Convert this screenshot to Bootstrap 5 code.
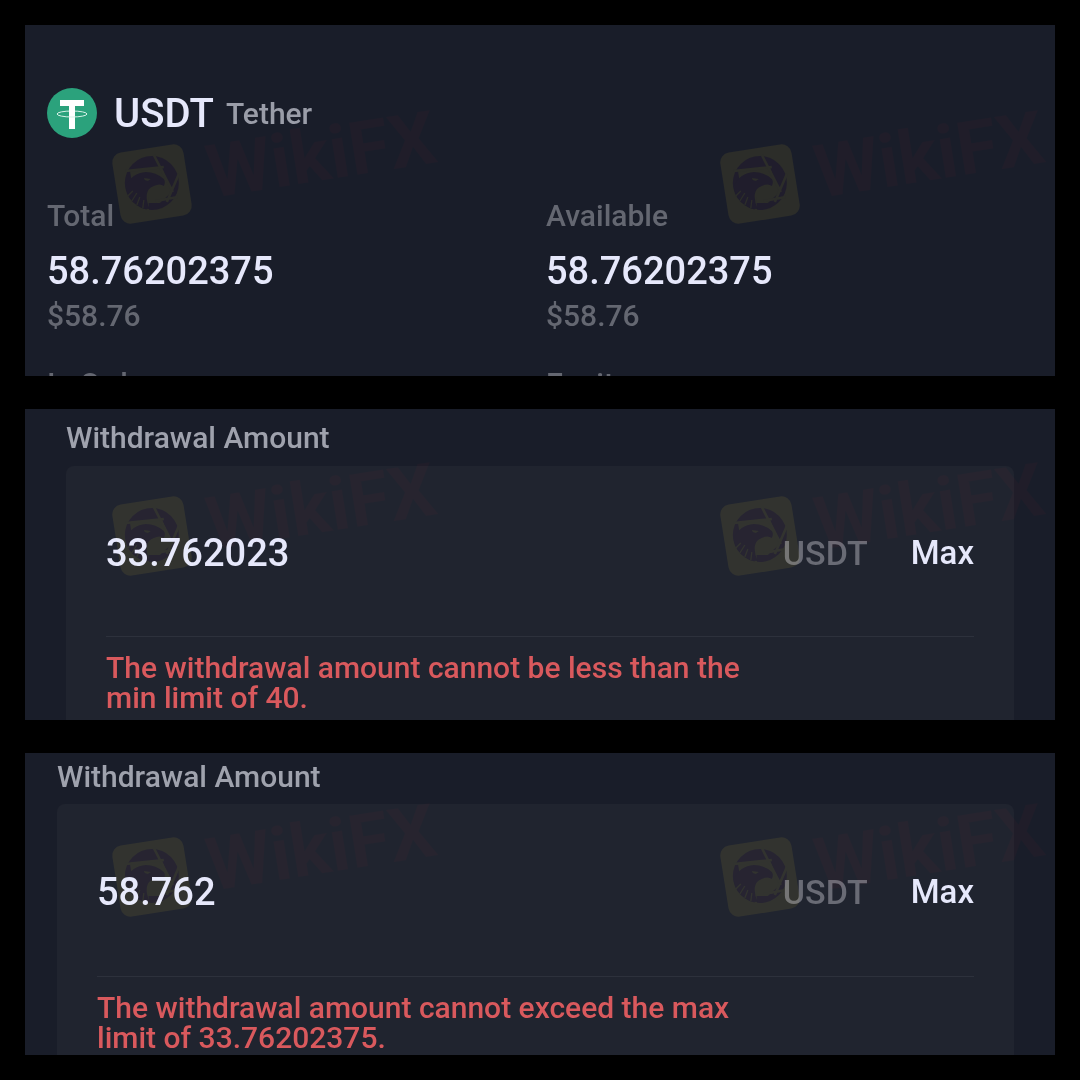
<!DOCTYPE html>
<html lang="en" data-bs-theme="dark">
<head>
<meta charset="utf-8">
<meta name="viewport" content="width=device-width, initial-scale=1">
<title>USDT withdrawal</title>
<link href="https://cdn.jsdelivr.net/npm/bootstrap@5.3.0/dist/css/bootstrap.min.css" rel="stylesheet">
<style>
  body { background: #000; color: #e6e8fb; font-family: Roboto, "Liberation Sans", sans-serif; font-size: 30px; font-weight: 500; }
  .page { padding: 25px; gap: 33px; }
  .panel { background: #191d29; }
  .asset { max-height: 351px; padding: 62px 10px 0 22px; }
  .coin { width: 51px; height: 51px; }
  .asset-head { gap: 16px; margin-bottom: 58px; }
  .ticker { font-size: 40px; line-height: 53px; }
  .coin-name { line-height: 51px; color: #9a9da8; }
  .balances { row-gap: 32px; }
  .muted { color: #646771; line-height: 36px; }
  .figure { font-size: 38px; line-height: 54px; margin-top: 10px; }
  .withdraw { padding: 11px 41px 0 41px; }
  .withdraw.wide { padding: 6px 41px 0 32px; }
  .field-label { color: #9fa2ad; line-height: 36px; margin-bottom: 10px; }
  .wide .field-label { margin-bottom: 9px; }
  .box { background: #20242f; border-radius: 8px 8px 0 0; padding: 0 40px 7px; }
  .wide .box { padding-bottom: 2px; }
  .amount-row { height: 171px; padding-top: 4px; border-bottom: 1px solid #2d313c; gap: 43px; }
  .wide .amount-row { height: 173px; }
  .amount-row input { font-size: 38px; font-weight: 500; color: #e6e8fb; min-width: 0; outline: 0; }
  .unit { font-size: 34px; line-height: 40px; color: #696b75; }
  .max { font-size: 33px; font-weight: 500; color: #e6e8fb; line-height: 40px; }
  .error { color: #d9595d; line-height: 30px; margin: 16px 0 0; max-width: 660px; }
  .stamp { width: 345px; height: 140px; top: 75px; pointer-events: none; mix-blend-mode: screen; }
  .withdraw .stamp { top: 43px; }
  .withdraw.wide .stamp { top: 40px; }
  .stamp-a { left: 80px; }
  .stamp-b { right: 0; width: 342px; }
  .stamp-name { font: 700 74px Roboto, sans-serif; fill: #080000; }
</style>
<script src="https://cdn.jsdelivr.net/npm/bootstrap@5.3.0/dist/js/bootstrap.bundle.min.js"></script>
</head>
<body>
<svg class="d-none" aria-hidden="true">
  <symbol id="stamp" viewBox="0 0 345 140">
    <g transform="rotate(-9 47 84)">
      <rect x="11" y="48" width="72" height="72" rx="10" fill="#151200"/>
      <g transform="translate(47 83) rotate(9)">
        <circle r="27" fill="#080003"/>
        <path d="M-22-13L10-16L20 9L8 20L-4 20L-20 0Z" fill="#151200"/>
        <g fill="none" stroke="#151200" stroke-width="2.6">
          <path d="M-26-12L12-16M2-28L21 9M27-9L15 19M26 14L4 18M-4 27L-5 14"/>
        </g>
        <path d="M-26 3Q-20-10-6-11Q4-11 12-4Q14-1 12 3Q8 0 2 3Q-4 5-5 11Q-6 18-2 26Q-11 26-17 20Q-26 12-26 3Z" fill="#080003"/>
        <path d="M-8-5l7 1-3 2-3-1z" fill="#151200"/>
        <path d="M-24 13l5-5M-20 18l5-8M-15 22l3-8M-9 25l1-8" fill="none" stroke="#151200" stroke-width="1.3"/>
      </g>
    </g>
    <text class="stamp-name" transform="translate(106 98) rotate(-9)">WikiFX</text>
  </symbol>
</svg>

<main class="page d-flex flex-column">
  <section class="panel asset position-relative overflow-hidden">
    <div class="asset-head d-flex align-items-center">
      <svg class="coin flex-shrink-0" viewBox="0 0 51 51" role="img" aria-label="Tether">
        <circle cx="25" cy="25" r="25" fill="#2ba27c"/>
        <path d="M13 12h24v6h-9v23h-6v-23h-9z" fill="#fff"/>
        <ellipse cx="25" cy="26" rx="15" ry="3" fill="none" stroke="#d8f2e8" stroke-width="1"/>
        <path d="M22 21h6v5h-6z" fill="#fff"/>
      </svg>
      <div class="d-flex align-items-center gap-2">
        <span class="ticker">USDT</span>
        <span class="coin-name ms-1">Tether</span>
      </div>
    </div>
    <div class="balances row gx-0">
      <div class="col-6">
        <div class="muted">Total</div>
        <div class="figure">58.76202375</div>
        <div class="muted">$58.76</div>
      </div>
      <div class="col-6">
        <div class="muted">Available</div>
        <div class="figure">58.76202375</div>
        <div class="muted">$58.76</div>
      </div>
      <div class="col-6"><div class="muted">In Order</div></div>
      <div class="col-6"><div class="muted">Equity</div></div>
    </div>
    <svg class="stamp stamp-a position-absolute"><use href="#stamp"/></svg>
    <svg class="stamp stamp-b position-absolute" viewBox="0 0 342 140"><use href="#stamp" width="345" height="140"/></svg>
  </section>

  <section class="panel withdraw position-relative overflow-hidden">
    <label class="field-label d-block" for="amount-min">Withdrawal Amount</label>
    <div class="box">
      <div class="amount-row d-flex align-items-center">
        <input id="amount-min" class="bg-transparent border-0 p-0 flex-grow-1" type="text" inputmode="decimal" value="33.762023">
        <span class="unit">USDT</span>
        <button class="max btn border-0 p-0" type="button">Max</button>
      </div>
      <p class="error">The withdrawal amount cannot be less than the min limit of 40.</p>
    </div>
    <svg class="stamp stamp-a position-absolute"><use href="#stamp"/></svg>
    <svg class="stamp stamp-b position-absolute" viewBox="0 0 342 140"><use href="#stamp" width="345" height="140"/></svg>
  </section>

  <section class="panel withdraw wide position-relative overflow-hidden">
    <label class="field-label d-block" for="amount-max">Withdrawal Amount</label>
    <div class="box">
      <div class="amount-row d-flex align-items-center">
        <input id="amount-max" class="bg-transparent border-0 p-0 flex-grow-1" type="text" inputmode="decimal" value="58.762">
        <span class="unit">USDT</span>
        <button class="max btn border-0 p-0" type="button">Max</button>
      </div>
      <p class="error">The withdrawal amount cannot exceed the max limit of 33.76202375.</p>
    </div>
    <svg class="stamp stamp-a position-absolute"><use href="#stamp"/></svg>
    <svg class="stamp stamp-b position-absolute" viewBox="0 0 342 140"><use href="#stamp" width="345" height="140"/></svg>
  </section>
</main>
</body>
</html>
